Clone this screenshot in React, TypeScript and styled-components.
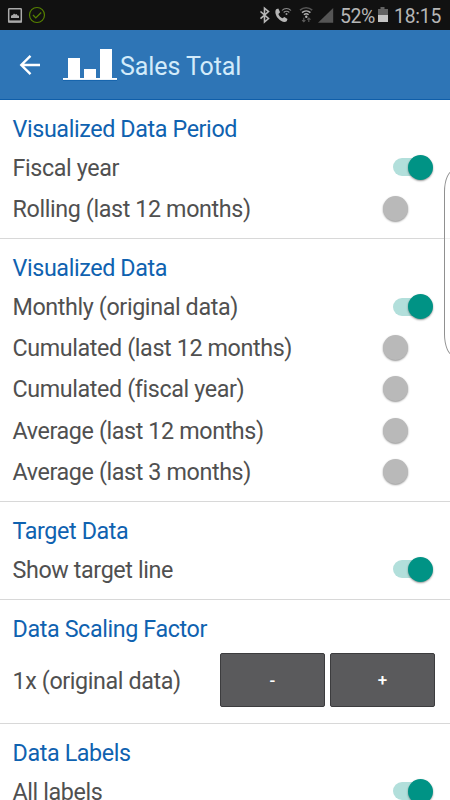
import React, { useState } from "react";
import styled, { createGlobalStyle } from "styled-components";

const GlobalStyle = createGlobalStyle`
  * { box-sizing: border-box; }
  body { margin: 0; background: #fff; font-family: Roboto, sans-serif; overflow: hidden; }
  svg { display: block; flex: none; }
`;

const Screen = styled.div`
  position: relative;
  width: 450px;
  height: 800px;
  overflow: hidden;
  display: flex;
  flex-direction: column;
  background: #fff;
`;

const StatusBar = styled.div`
  height: 30px;
  flex: none;
  display: flex;
  justify-content: space-between;
  background: #111;
  color: #b6b6b6;
`;

const StatusText = styled.span<{ $size: number; $spacing: number }>`
  font-size: ${(p) => p.$size}px;
  letter-spacing: ${(p) => p.$spacing}px;
  line-height: 33px;
  white-space: nowrap;
`;

const AppBar = styled.header`
  height: 70px;
  flex: none;
  display: flex;
  align-items: center;
  background: #2e75b6;
  border-bottom: 1px solid #0f5ea9;
`;

const AppTitle = styled.h1`
  margin: 5px 0 0 2px;
  font-size: 25px;
  font-weight: 400;
  line-height: 30px;
  letter-spacing: -0.08px;
  color: #d3ebfa;
`;

const Section = styled.section`
  flex: none;
  padding: 12px 15px 8.5px 12.5px;
  border-bottom: 1.4px solid #d8d8d8;
`;

const SectionTitle = styled.h2`
  margin: 0;
  height: 35.3px;
  font-size: 23.3px;
  font-weight: 400;
  line-height: 35px;
  letter-spacing: -0.38px;
  color: #0f62b0;
`;

const Row = styled.div<{ $tall?: boolean }>`
  height: ${(p) => (p.$tall ? 67 : 41.2)}px;
  display: flex;
  align-items: center;
  justify-content: space-between;
`;

const Label = styled.span`
  font-size: 23.3px;
  line-height: 30px;
  letter-spacing: -0.38px;
  white-space: nowrap;
  color: #505050;
`;

const Track = styled.button<{ $on: boolean }>`
  width: 39px;
  height: 18px;
  margin: -1px 3px 0 0;
  padding: 0;
  border: 0;
  border-radius: 9px;
  display: flex;
  align-items: center;
  justify-content: ${(p) => (p.$on ? "flex-end" : "flex-start")};
  background: ${(p) => (p.$on ? "#b2dfdb" : "transparent")};
`;

const Thumb = styled.span<{ $on: boolean }>`
  width: 25px;
  height: 25px;
  flex: none;
  margin: ${(p) => (p.$on ? "0 -1px 0 0" : "0 0 0 -10px")};
  border-radius: 50%;
  background: ${(p) => (p.$on ? "#009385" : "#b9b9b9")};
  box-shadow: 0 1px 2px rgba(0, 0, 0, 0.42);
`;

const Buttons = styled.div`
  display: flex;
  gap: 5px;
`;

const StepButton = styled.button`
  width: 105px;
  height: 54px;
  margin-top: -1px;
  padding: 0;
  border: 1px solid #3c3c3e;
  border-radius: 2px;
  background: #5a5a5c;
  color: #fff;
  font: 500 17px/20px Roboto, sans-serif;
`;

const EdgePanel = styled.div`
  position: absolute;
  top: 170px;
  left: 444px;
  width: 20px;
  height: 186px;
  border: 1px solid #909090;
  border-radius: 12px / 26px;
  background: rgba(255, 255, 255, 0.6);
`;

function Switch({ initial }: { initial: boolean }) {
  const [on, setOn] = useState(initial);
  return (
    <Track $on={on} role="switch" aria-checked={on} onClick={() => setOn(!on)}>
      <Thumb $on={on} />
    </Track>
  );
}

function StatusIcons() {
  return (
    <svg width="50" height="30" fill="none">
      <rect x="8.7" y="8.7" width="12.6" height="13.4" rx="0.7" stroke="#aaa" strokeWidth="1.5" />
      <path d="M8 21.4h14" stroke="#aaa" strokeWidth="2" />
      <path d="M11 18v-2.2l2-1 1-1.2 1.2 1 1.4-.6 1 1.6 1.4.2V18z" fill="#aaa" />
      <circle cx="37" cy="15" r="7.5" stroke="#568000" strokeWidth="1.2" />
      <path d="M33 15l2.8 2.9 5.4-5.4" stroke="#568000" strokeWidth="1.3" />
    </svg>
  );
}

function SignalIcons() {
  return (
    <svg width="82" height="30" viewBox="258 0 82 30" fill="none">
      <path d="M260.5 11.5l8 7-4 3.5V8.2l4 3.4-8 7" stroke="#b6b6b6" strokeWidth="1.6" />
      <path
        d="M276.2 9.2l2.1-.7 1.8 3.8-1.7 1.8c.5 1.8 2.1 3.3 4 4.2l2-1.4 3.1 2.2-.8 2.2c-2.1 1.7-5.6.5-8.4-2.7-2.8-3.2-3.8-7.3-2.1-9.4z"
        fill="#b6b6b6"
      />
      <path d="M282 10.5c2.4-2.7 6.5-2.7 9 0M283.7 12.5c1.6-1.7 4-1.7 5.6 0" stroke="#8c8c8c" strokeWidth="1.1" />
      <circle cx="286.5" cy="14" r="1" fill="#999" />
      <path d="M300 10.2c3.5-3.2 8.7-3.2 12.2 0" stroke="#555" strokeWidth="1.6" />
      <path d="M302 12.6c2.5-2.2 6-2.2 8.4 0M303.9 14.7c1.4-1.2 3.3-1.2 4.7 0" stroke="#b0b0b0" strokeWidth="1.5" />
      <circle cx="306.3" cy="16.7" r="1.2" fill="#b6b6b6" />
      <path d="M303.8 17.8v3.7m-1.7-1.4l1.7 1.7 1.6-1.7M308.8 22v-3.7m-1.6 1.4l1.6-1.6 1.7 1.6" stroke="#5b5b5b" strokeWidth="1.1" />
      <path d="M318 22.7L333.2 8v14.7z" fill="#555" />
    </svg>
  );
}

function Battery() {
  return (
    <svg width="19" height="30">
      <path d="M4 9h2.5V7h4v2H14v6H4z" fill="#626262" />
      <path d="M4 15h10v7H4z" fill="#c4c4c4" />
    </svg>
  );
}

const StatusGroup = styled.div`
  display: flex;
  width: 192px;
`;

const PercentText = styled(StatusText)`
  width: 34px;
`;

const ClockText = styled(StatusText)`
  margin-left: 1px;
`;

const sections = [
  { title: "Visualized Data Period", rows: [["Fiscal year", true], ["Rolling (last 12 months)", false]] },
  {
    title: "Visualized Data",
    rows: [
      ["Monthly (original data)", true],
      ["Cumulated (last 12 months)", false],
      ["Cumulated (fiscal year)", false],
      ["Average (last 12 months)", false],
      ["Average (last 3 months)", false],
    ],
  },
  { title: "Target Data", rows: [["Show target line", true]] },
  { title: "Data Scaling Factor", rows: [] },
  { title: "Data Labels", rows: [["All labels", true]] },
] as { title: string; rows: [string, boolean][] }[];

export default function App() {
  return (
    <Screen>
      <GlobalStyle />
      <StatusBar>
        <StatusIcons />
        <StatusGroup>
          <SignalIcons />
          <PercentText $size={19.5} $spacing={-0.5}>52%</PercentText>
          <Battery />
          <ClockText $size={19.3} $spacing={-0.2}>18:15</ClockText>
        </StatusGroup>
      </StatusBar>
      <AppBar>
        <svg width="118" height="69" viewBox="0 30 118 69" fill="none">
          <path d="M40 65H22M30.5 55.8l-9.2 9.2 9.2 9.2" stroke="#fff" strokeWidth="2.4" />
          <path d="M68 58h12v20H68zM84 69h12v9H84zM100 49h12v29h-12zM63 78h54v2H63z" fill="#fff" />
          <path d="M63 80.4h54" stroke="#0f5ea9" strokeWidth=".8" />
        </svg>
        <AppTitle>Sales Total</AppTitle>
      </AppBar>
      {sections.map(({ title, rows }) => (
        <Section key={title}>
          <SectionTitle>{title}</SectionTitle>
          {rows.map(([label, on]) => (
            <Row key={label}>
              <Label>{label}</Label>
              <Switch initial={on} />
            </Row>
          ))}
          {rows.length === 0 && (
            <Row $tall>
              <Label>1x (original data)</Label>
              <Buttons>
                <StepButton>-</StepButton>
                <StepButton>+</StepButton>
              </Buttons>
            </Row>
          )}
        </Section>
      ))}
      <EdgePanel />
    </Screen>
  );
}
